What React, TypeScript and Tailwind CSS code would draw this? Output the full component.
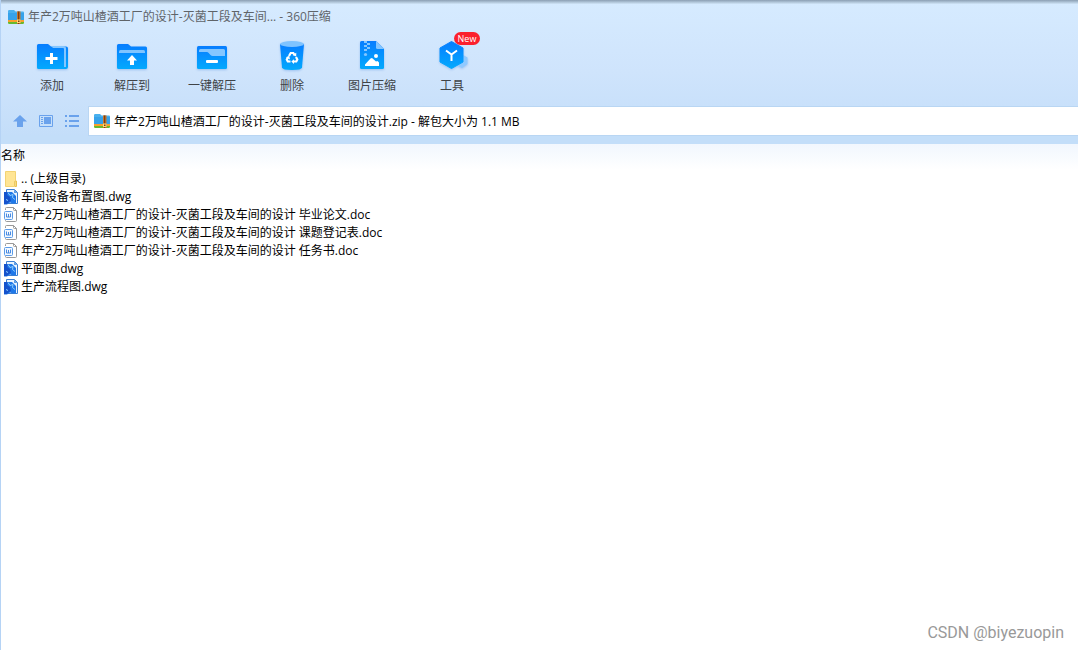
import type { ReactNode } from "react";

function ArchiveIcon() {
  return (
    <svg width="16" height="14" viewBox="0 0 16 14" aria-hidden="true" className="shrink-0">
      <path d="M0 1.200Q0 0 1.200 0H6l1.600 1.400H15q1 0 1 1V10.500H0Z" fill="#49b0ee" />
      <path d="M0 3h16v7.500H0Z" fill="#36a2ea" />
      <path d="M0 10h16v2H0Z" fill="#f8a02c" />
      <path d="M0 12h16v.8q0 1.200-1.200 1.200H1.200Q0 14 0 12.800Z" fill="#67b92f" />
      <path d="M9 1.400h3.500V14H9Z" fill="#c9752a" />
      <path d="M10.200 1.400h1V14h-1Z" fill="#6b3410" />
      <path d="M9 9.500h3.500v3.500H9Z" fill="#ffd873" />
      <path d="M10 10.500h1.500V12H10Z" fill="#7a3b10" />
    </svg>
  );
}

function BlueGradient({ id }: { id: string }) {
  return (
    <defs>
      <linearGradient id={id} x1="0" y1="0" x2="0" y2="1">
        <stop offset="0" stopColor="#077dff" />
        <stop offset="1" stopColor="#03a9fd" />
      </linearGradient>
    </defs>
  );
}

const iconClass = "drop-shadow-[0_1px_1px_rgba(60,130,220,0.35)]";

function AddIcon() {
  return (
    <svg width="32" height="32" viewBox="0 0 32 32" aria-hidden="true" className={iconClass}>
      <BlueGradient id="add" />
      <path d="M1 5.500Q1 4 2.500 4H12l3 2.500H30q2 0 2 2V27q0 2-2 2H2.500Q1 29 1 27.500Z" fill="url(#add)" />
      <path d="M15 6h12.500Q30 6 30 8.500V27h-2V9q0-1-1-1H17Z" fill="#84c6ff" />
      <path d="M14 13h3v4h4.500v3H17v4h-3v-4H9.500v-3H14Z" fill="#fff" />
    </svg>
  );
}

function ExtractIcon() {
  return (
    <svg width="32" height="32" viewBox="0 0 32 32" aria-hidden="true" className={iconClass}>
      <BlueGradient id="extract" />
      <path d="M1 5.500Q1 4 2.500 4H12l3 2.500H29.500Q31 6.500 31 8v19.500q0 1.500-1.500 1.500h-27Q1 29 1 27.500Z" fill="url(#extract)" />
      <path d="M3 13v-1.500Q3 10 4.500 10h23Q29 10 29 11.500V13Z" fill="#7fc4ff" />
      <path d="m16 15 5 5.500h-3V25h-4v-4.500h-3Z" fill="#fff" />
    </svg>
  );
}

function OneClickIcon() {
  return (
    <svg width="32" height="32" viewBox="0 0 32 32" aria-hidden="true" className={iconClass}>
      <BlueGradient id="oneclick" />
      <rect x="1" y="6" width="30" height="23" rx="1.500" fill="url(#oneclick)" />
      <path d="M3 12v-1.500Q3 9 4.500 9h23Q29 9 29 10.500V16H16.500q-1 0-1.800-.8l-2-2.200q-.8-1-2-1Z" fill="#84c6ff" />
      <rect x="10" y="20" width="12" height="3" rx="1" fill="#fff" />
    </svg>
  );
}

function DeleteIcon() {
  return (
    <svg width="32" height="32" viewBox="0 0 32 32" aria-hidden="true" className={iconClass}>
      <BlueGradient id="delete" />
      <path d="M4 4h24l-2 23.500Q25.500 30 16 30T6 27.500Z" fill="url(#delete)" />
      <ellipse cx="16" cy="4" rx="12" ry="3" fill="#7fc3ff" />
      <g fill="none" stroke="#fff" strokeWidth="2.200">
        <path d="m13 16 1.700-3h2.600l1.300 2" />
        <path d="m20 17 1.300 2.500-1 2H17.500" />
        <path d="M14.500 21.500h-2.700l-1-2 1.200-2.300" />
      </g>
      <path d="m20.300 12.800-.1 3.800-3.700-1.600ZM18 19.200V24l-2.700-2.500ZM10 17.200l3.200-1.400.8 3.600Z" fill="#fff" />
    </svg>
  );
}

function ImageIcon() {
  return (
    <svg width="32" height="32" viewBox="0 0 32 32" aria-hidden="true" className={iconClass}>
      <BlueGradient id="image" />
      <path d="M4 2.500Q4 1 5.500 1H20l8 8v18.500q0 1.500-1.500 1.500h-21Q4 29 4 27.500Z" fill="url(#image)" />
      <path d="M20 1v6.500Q20 9 21.500 9H28Z" fill="#84c6ff" />
      <path d="M8 1h3v2h3v2h-3v2h3v2h-3v2H8V9h3V7H8V5h3V3H8Z" fill="#84c6ff" />
      <circle cx="9.500" cy="14.500" r="1.600" fill="#84c6ff" />
      <circle cx="20" cy="16" r="2" fill="#fff" />
      <path d="M9 26v-1.500l5.500-6 1.500-.5 4 3.500 1.500-.5 1.500 1.500V26Z" fill="#fff" />
    </svg>
  );
}

function ToolsIcon() {
  return (
    <svg width="32" height="32" viewBox="0 0 32 32" aria-hidden="true" className={iconClass}>
      <BlueGradient id="tools" />
      <path d="m27 15 4.500 2.500V24L26 28l-5-3Z" fill="#8fc9ff" />
      <path d="M15.500 1.500 27 8v14l-11.500 6.500L4 22V8Z" fill="url(#tools)" stroke="url(#tools)" strokeLinejoin="round" />
      <path d="m10 10.500 5.500 4 5.500-4M15.500 14.500V21" fill="none" stroke="#fff" strokeWidth="2" />
    </svg>
  );
}

function FolderIcon() {
  return (
    <svg width="16" height="18" viewBox="0 0 16 18" aria-hidden="true">
      <path d="M2.500 1.500h10v9l-1 1v5h-9Z" fill="#ffe594" stroke="#f3d373" />
      <path d="M12 11h1.500v5.500H12Z" fill="#fff0b8" stroke="#e9c251" />
    </svg>
  );
}

function DwgIcon() {
  return (
    <svg width="16" height="18" viewBox="0 0 16 18" aria-hidden="true">
      <path d="M3.500 1.500h8l3 3v11h-11Z" fill="#e9f4ff" stroke="#3d7fd0" />
      <path d="M1 4h8l4 4v7l-3 .5-3-1-3 2H1Z" fill="#1f78e8" />
      <path d="M1 4h4L4 7l3 2 1 4-2 1-2 2H1Z" fill="#1452cc" />
      <path d="m5 4.500 2 3 3-1-.5 3 2.500 2M3 11.500l2 1" fill="none" stroke="#8fd0ff" />
      <path d="M11 1.500V5h3.500Z" fill="#5b9ce6" />
    </svg>
  );
}

function DocIcon() {
  return (
    <svg width="16" height="18" viewBox="0 0 16 18" aria-hidden="true">
      <path d="M2.500 4V2.500q0-1 1-1h7l3 3v10q0 1-1 1h-9q-1 0-1-1V14" fill="#fff" stroke="#999" />
      <path d="M10.500 1.500v2q0 1 1 1h2" fill="none" stroke="#999" />
      <rect x="1.500" y="5.500" width="8" height="8" rx="1" fill="#f2f8ff" stroke="#5b9be8" />
      <path d="M3.500 7.500v3.500h4V7.500M5.500 8v3" fill="none" stroke="#4a8be0" />
    </svg>
  );
}

const tools: { label: string; icon: ReactNode; isNew?: boolean }[] = [
  { label: "添加", icon: <AddIcon /> },
  { label: "解压到", icon: <ExtractIcon /> },
  { label: "一键解压", icon: <OneClickIcon /> },
  { label: "删除", icon: <DeleteIcon /> },
  { label: "图片压缩", icon: <ImageIcon /> },
  { label: "工具", icon: <ToolsIcon />, isNew: true },
];

const files: { name: string; icon: ReactNode }[] = [
  { name: ".. (上级目录)", icon: <FolderIcon /> },
  { name: "车间设备布置图.dwg", icon: <DwgIcon /> },
  { name: "年产2万吨山楂酒工厂的设计-灭菌工段及车间的设计 毕业论文.doc", icon: <DocIcon /> },
  { name: "年产2万吨山楂酒工厂的设计-灭菌工段及车间的设计 课题登记表.doc", icon: <DocIcon /> },
  { name: "年产2万吨山楂酒工厂的设计-灭菌工段及车间的设计 任务书.doc", icon: <DocIcon /> },
  { name: "平面图.dwg", icon: <DwgIcon /> },
  { name: "生产流程图.dwg", icon: <DwgIcon /> },
];

export default function App() {
  return (
    <div className="flex min-h-screen flex-col border-l border-[#b5d3f5] bg-white font-['Open_Sans','Noto_Sans_CJK_SC',sans-serif] text-xs text-black">
      <header className="bg-linear-to-b from-[#d6ebff] via-[#cfe4fc] to-[#c2ddf9]">
        <div className="h-1 bg-linear-to-b from-[#8b9fb3] to-[#d0e5f8]" />
        <div className="flex h-[26px] items-center gap-1 px-[7px]">
          <ArchiveIcon />
          <h1 className="text-[#5f6469]">年产2万吨山楂酒工厂的设计-灭菌工段及车间... - 360压缩</h1>
        </div>

        <nav aria-label="工具栏" className="flex h-[77px] pt-2.5 pl-[11px]">
          {tools.map((tool) => (
            <button key={tool.label} type="button" className="relative flex h-14 w-20 flex-col items-center gap-1 text-[#3f4347]">
              {tool.icon}
              <span className="leading-5">{tool.label}</span>
              {tool.isNew && (
                <span className="absolute -top-2 left-[42px] flex h-[13px] w-[26px] items-center justify-center rounded-full bg-[#fb202d] text-[9px] leading-none text-white">
                  New
                </span>
              )}
            </button>
          ))}
        </nav>

        <div className="flex h-7 items-center">
          <div className="flex w-22 shrink-0 items-center gap-2.5 pl-[11px] text-[#6aa2ec]">
            <button type="button" aria-label="向上" className="shrink-0">
              <svg width="16" height="16" viewBox="0 0 16 16" aria-hidden="true">
                <path d="m8 2 7 6.500h-4V14H5V8.500H1Z" fill="currentColor" />
              </svg>
            </button>
            <button type="button" aria-label="预览视图" className="shrink-0">
              <svg width="16" height="16" viewBox="0 0 16 16" aria-hidden="true">
                <path d="M1.500 2.500h13v11h-13Z" fill="none" stroke="currentColor" />
                <path d="M6 4h7v7H6ZM3 4h2v1H3ZM3 6h2v1H3ZM3 8h2v1H3ZM3 10h2v1H3Z" fill="currentColor" />
              </svg>
            </button>
            <button type="button" aria-label="列表视图" className="shrink-0">
              <svg width="16" height="16" viewBox="0 0 16 16" aria-hidden="true">
                <path d="M1 2h2v2H1ZM5 2h10v2H5ZM1 7h2v2H1ZM5 7h10v2H5ZM1 12h2v2H1ZM5 12h10v2H5Z" fill="currentColor" />
              </svg>
            </button>
          </div>
          <label className="flex h-7 min-w-0 flex-1 items-center gap-1 bg-white pl-[5px] outline outline-[#b9d6f3]">
            <ArchiveIcon />
            <input
              type="text"
              aria-label="地址"
              readOnly
              value="年产2万吨山楂酒工厂的设计-灭菌工段及车间的设计.zip - 解包大小为 1.1 MB"
              className="h-7 min-w-0 flex-1 outline-none"
            />
          </label>
        </div>
        <div className="h-[9px] bg-[#c3def9]" />
      </header>

      <main className="flex-1">
        <table className="w-full border-collapse text-left">
          <thead>
            <tr className="h-[26px] bg-linear-to-b from-[#f1f7fe] to-white">
              <th scope="col" className="p-0 pb-0.5 font-normal">名称</th>
            </tr>
          </thead>
          <tbody>
            {files.map((file) => (
              <tr key={file.name} className="h-[18px]">
                <td className="p-0">
                  <div className="flex h-[18px] items-center gap-0.5 pl-0.5 whitespace-nowrap">
                    {file.icon}
                    <span>{file.name}</span>
                  </div>
                </td>
              </tr>
            ))}
          </tbody>
        </table>
      </main>

      <footer className="px-3.5 pb-1.5 text-right font-[Roboto,sans-serif] text-base leading-[22px] text-[#999]">
        CSDN @biyezuopin
      </footer>
    </div>
  );
}
